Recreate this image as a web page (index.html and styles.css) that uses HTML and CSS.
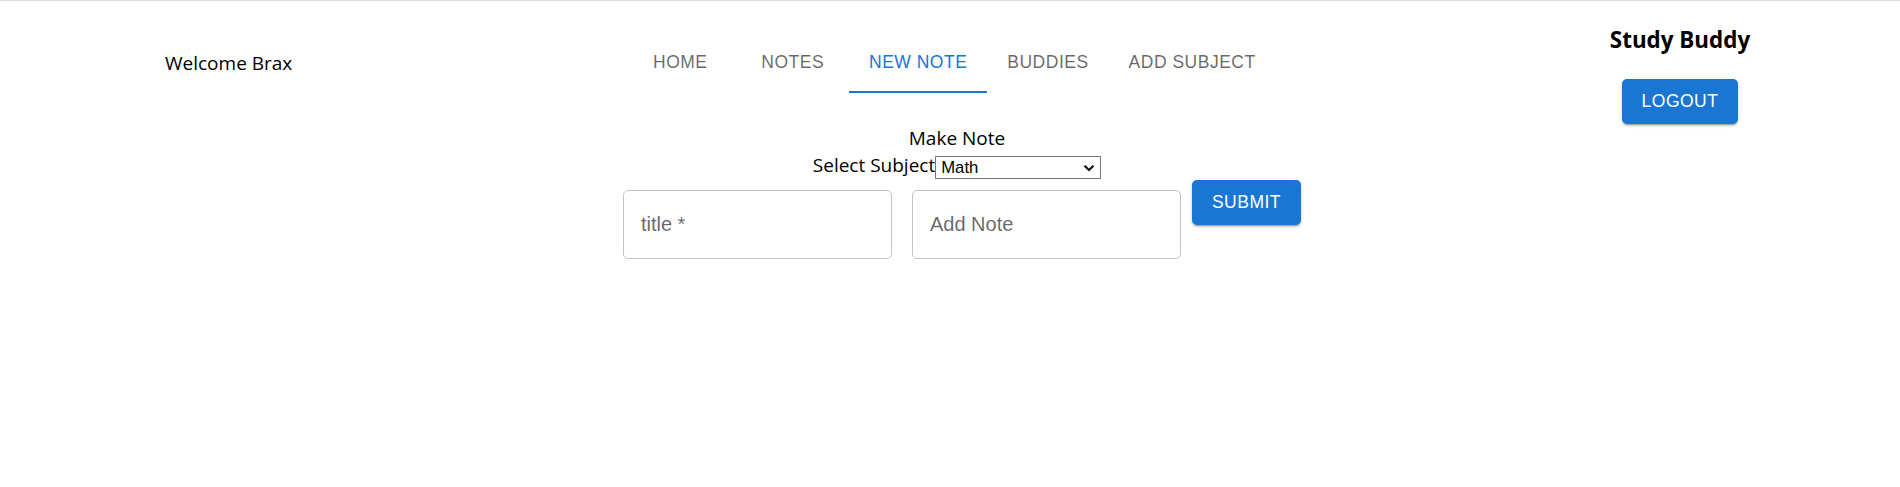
FILE: index.html
```html
<!DOCTYPE html>
<html lang="en">
<head>
<meta charset="utf-8">
<title>Study Buddy</title>
<link rel="stylesheet" href="styles.css">
</head>
<body>
<div class="topline"></div>
<header class="nav">
  <div class="welcome">Welcome Brax</div>
  <nav class="tabs">
    <a class="tab">Home</a>
    <a class="tab">Notes</a>
    <a class="tab active">New Note</a>
    <a class="tab">Buddies</a>
    <a class="tab">Add Subject</a>
  </nav>
  <div class="brand">
    <h3 class="brand-title">Study Buddy</h3>
    <button class="btn" type="button">Logout</button>
  </div>
</header>
<main class="make">
  <div class="make-title">Make Note</div>
  <div class="subject">Select Subject<select class="subject-select"><option>Math</option></select></div>
  <form class="note-form">
    <input class="field" type="text" placeholder="title *">
    <input class="field" type="text" placeholder="Add Note">
    <button class="btn btn-submit" type="button">Submit</button>
  </form>
</main>
</body>
</html>
```
FILE: styles.css
```css
* { box-sizing: border-box; }
html, body { margin: 0; padding: 0; background: #fff; }
body {
  font-family: "Open Sans", "Noto Sans", sans-serif;
  font-size: 19px;
  color: #000;
}
.topline { height: 1px; background: #dcdcdc; }

.nav {
  display: flex;
  align-items: center;
  height: 124px;
  padding-left: 165px;
}
.welcome { flex: 0 0 459px; line-height: 27px; }
.tabs { display: flex; }
.tab {
  position: relative;
  min-width: 112.5px;
  height: 60px;
  padding: 0 20px;
  display: flex;
  align-items: center;
  justify-content: center;
  font-family: "Liberation Sans", Arial, sans-serif;
  font-size: 17.5px;
  line-height: 21.875px;
  letter-spacing: 0.5px;
  text-transform: uppercase;
  color: rgba(0, 0, 0, 0.6);
  cursor: pointer;
}
.tab.active { color: #1976d2; }
.tab.active::after {
  content: "";
  position: absolute;
  left: 0; right: 0; bottom: 0;
  height: 2.5px;
  background: #1976d2;
}
.brand {
  margin-left: auto;
  margin-right: 140px;
  width: 160px;
  align-self: flex-start;
  display: flex;
  flex-direction: column;
  align-items: center;
}
.brand-title {
  margin: 23.5px 0 24px;
  font-size: 22.4px;
  line-height: 30px;
  font-weight: 700;
  white-space: nowrap;
}
.btn {
  height: 45px;
  padding: 0 20px;
  border: none;
  border-radius: 5px;
  background: #1976d2;
  color: #fff;
  font-family: "Liberation Sans", Arial, sans-serif;
  font-size: 17.5px;
  letter-spacing: 0.5px;
  text-transform: uppercase;
  box-shadow: 0 3px 1px -2px rgba(0,0,0,0.2), 0 2px 2px 0 rgba(0,0,0,0.14), 0 1px 5px 0 rgba(0,0,0,0.12);
  cursor: pointer;
}

.make {
  padding-left: 14px;
  display: flex;
  flex-direction: column;
  align-items: center;
}
.make-title { line-height: 27px; }
.subject {
  display: flex;
  align-items: flex-end;
  height: 27px;
  line-height: 27px;
}
.subject-select {
  -webkit-appearance: none;
  appearance: none;
  width: 166px;
  height: 23px;
  font-family: "Liberation Sans", Arial, sans-serif;
  font-size: 16.7px;
  line-height: 21px;
  color: #000;
  background-color: #fff;
  background-image: url("data:image/svg+xml,%3Csvg xmlns='http://www.w3.org/2000/svg' width='12' height='8' viewBox='0 0 12 8'%3E%3Cpath d='M1.5 1.8 L6 6 L10.5 1.8' fill='none' stroke='%23111' stroke-width='2.2'/%3E%3C/svg%3E");
  background-repeat: no-repeat;
  background-position: right 5px center;
  background-size: 12px 8px;
  border: 1px solid #767676;
  border-radius: 0;
  padding: 0 20px 0 5px;
}
.note-form {
  display: flex;
  align-items: flex-start;
  margin-top: 1px;
}
.field {
  margin: 10px;
  width: 269px;
  height: 69px;
  border: 1px solid #c4c4c4;
  border-radius: 5px;
  padding: 0 17px;
  font-family: "Liberation Sans", Arial, sans-serif;
  font-size: 20px;
  color: #000;
  background: #fff;
  outline: none;
}
.field::placeholder { color: rgba(0, 0, 0, 0.6); opacity: 1; }
.btn-submit { margin-left: 1px; }
```
